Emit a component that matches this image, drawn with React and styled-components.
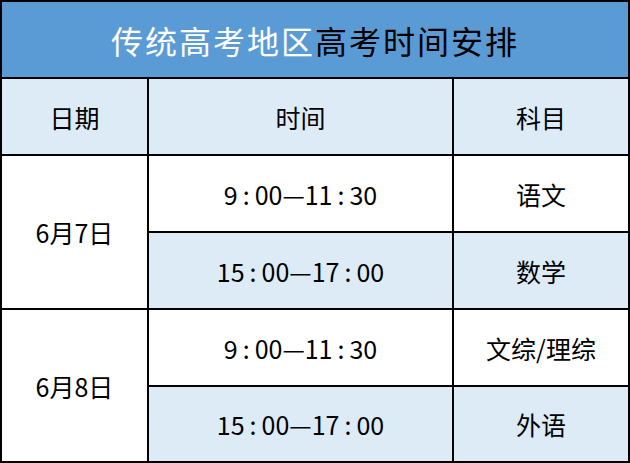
import React from 'react';
import styled, { createGlobalStyle } from 'styled-components';

const GlobalStyle = createGlobalStyle`
    html, body {
        margin: 0;
        padding: 0;
        background: #ffffff;
    }
    body {
        font-family: "Noto Sans CJK SC", "Noto Sans", sans-serif;
    }
`;

const Table = styled.div`
    width: 630px;
    height: 463px;
    box-sizing: border-box;
    display: grid;
    grid-template-columns: 145px 303px 174px;
    grid-template-rows: 75px 75px 75px 75px 75px 74px;
    gap: 2px;
    padding: 2px;
    background: #000000;
`;

const Title = styled.div`
    grid-column: 1 / span 3;
    display: flex;
    align-items: center;
    justify-content: center;
    background: #5b9bd5;
    font-size: 32px;
    letter-spacing: 2px;
    color: #000000;

    span {
        color: #ffffff;
    }
`;

const Cell = styled.div`
    display: flex;
    align-items: center;
    justify-content: center;
    background: ${props => (props.shaded ? '#ddebf7' : '#ffffff')};
    grid-row: ${props => (props.span ? `span ${props.span}` : 'auto')};
    font-size: 25px;
    color: #000000;
`;

const Colon = styled.span`
    margin: 0 5px;
`;

const schedule = [
    {
        date: '6月7日',
        slots: [
            { time: '9:00—11:30', subject: '语文' },
            { time: '15:00—17:00', subject: '数学' },
        ],
    },
    {
        date: '6月8日',
        slots: [
            { time: '9:00—11:30', subject: '文综/理综' },
            { time: '15:00—17:00', subject: '外语' },
        ],
    },
];

// colon in the source font has wide side bearings
const renderTime = text =>
    text.split(':').map((part, i) => (
        <React.Fragment key={i}>
            {i > 0 && <Colon>:</Colon>}
            {part}
        </React.Fragment>
    ));

export default function App() {
    return (
        <>
            <GlobalStyle />
            <Table>
                <Title>
                    <span>传统高考地区</span>高考时间安排
                </Title>
                <Cell shaded>日期</Cell>
                <Cell shaded>时间</Cell>
                <Cell shaded>科目</Cell>
                {schedule.map(day => (
                    <React.Fragment key={day.date}>
                        <Cell span={2}>{day.date}</Cell>
                        {day.slots.map((slot, i) => (
                            <React.Fragment key={slot.time}>
                                <Cell shaded={i === 1}>{renderTime(slot.time)}</Cell>
                                <Cell shaded={i === 1}>{slot.subject}</Cell>
                            </React.Fragment>
                        ))}
                    </React.Fragment>
                ))}
            </Table>
        </>
    );
}
